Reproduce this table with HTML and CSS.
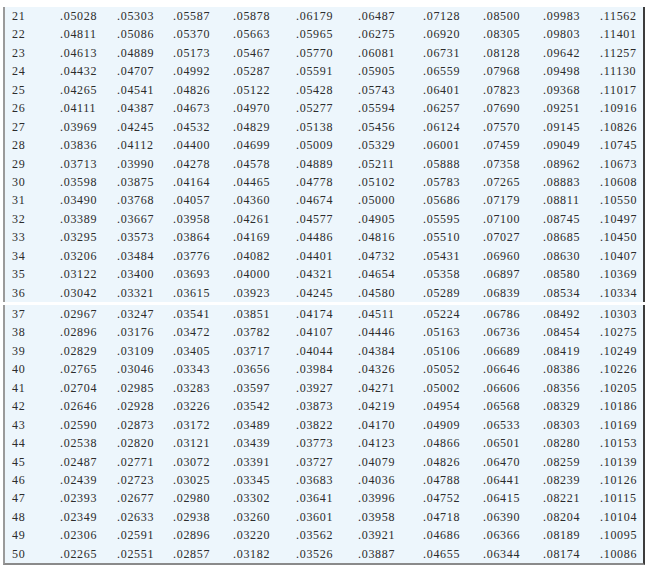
FILE: index.html
```html
<!DOCTYPE html>
<html>
<head>
<meta charset="utf-8">
<link rel="stylesheet" href="styles.css">
</head>
<body>
<div class="page">
  <div class="block">
    <div class="row"><span>21</span><span>.05028</span><span>.05303</span><span>.05587</span><span>.05878</span><span>.06179</span><span>.06487</span><span>.07128</span><span>.08500</span><span>.09983</span><span>.11562</span></div>
    <div class="row"><span>22</span><span>.04811</span><span>.05086</span><span>.05370</span><span>.05663</span><span>.05965</span><span>.06275</span><span>.06920</span><span>.08305</span><span>.09803</span><span>.11401</span></div>
    <div class="row"><span>23</span><span>.04613</span><span>.04889</span><span>.05173</span><span>.05467</span><span>.05770</span><span>.06081</span><span>.06731</span><span>.08128</span><span>.09642</span><span>.11257</span></div>
    <div class="row"><span>24</span><span>.04432</span><span>.04707</span><span>.04992</span><span>.05287</span><span>.05591</span><span>.05905</span><span>.06559</span><span>.07968</span><span>.09498</span><span>.11130</span></div>
    <div class="row"><span>25</span><span>.04265</span><span>.04541</span><span>.04826</span><span>.05122</span><span>.05428</span><span>.05743</span><span>.06401</span><span>.07823</span><span>.09368</span><span>.11017</span></div>
    <div class="row"><span>26</span><span>.04111</span><span>.04387</span><span>.04673</span><span>.04970</span><span>.05277</span><span>.05594</span><span>.06257</span><span>.07690</span><span>.09251</span><span>.10916</span></div>
    <div class="row"><span>27</span><span>.03969</span><span>.04245</span><span>.04532</span><span>.04829</span><span>.05138</span><span>.05456</span><span>.06124</span><span>.07570</span><span>.09145</span><span>.10826</span></div>
    <div class="row"><span>28</span><span>.03836</span><span>.04112</span><span>.04400</span><span>.04699</span><span>.05009</span><span>.05329</span><span>.06001</span><span>.07459</span><span>.09049</span><span>.10745</span></div>
    <div class="row"><span>29</span><span>.03713</span><span>.03990</span><span>.04278</span><span>.04578</span><span>.04889</span><span>.05211</span><span>.05888</span><span>.07358</span><span>.08962</span><span>.10673</span></div>
    <div class="row"><span>30</span><span>.03598</span><span>.03875</span><span>.04164</span><span>.04465</span><span>.04778</span><span>.05102</span><span>.05783</span><span>.07265</span><span>.08883</span><span>.10608</span></div>
    <div class="row"><span>31</span><span>.03490</span><span>.03768</span><span>.04057</span><span>.04360</span><span>.04674</span><span>.05000</span><span>.05686</span><span>.07179</span><span>.08811</span><span>.10550</span></div>
    <div class="row"><span>32</span><span>.03389</span><span>.03667</span><span>.03958</span><span>.04261</span><span>.04577</span><span>.04905</span><span>.05595</span><span>.07100</span><span>.08745</span><span>.10497</span></div>
    <div class="row"><span>33</span><span>.03295</span><span>.03573</span><span>.03864</span><span>.04169</span><span>.04486</span><span>.04816</span><span>.05510</span><span>.07027</span><span>.08685</span><span>.10450</span></div>
    <div class="row"><span>34</span><span>.03206</span><span>.03484</span><span>.03776</span><span>.04082</span><span>.04401</span><span>.04732</span><span>.05431</span><span>.06960</span><span>.08630</span><span>.10407</span></div>
    <div class="row"><span>35</span><span>.03122</span><span>.03400</span><span>.03693</span><span>.04000</span><span>.04321</span><span>.04654</span><span>.05358</span><span>.06897</span><span>.08580</span><span>.10369</span></div>
    <div class="row"><span>36</span><span>.03042</span><span>.03321</span><span>.03615</span><span>.03923</span><span>.04245</span><span>.04580</span><span>.05289</span><span>.06839</span><span>.08534</span><span>.10334</span></div>
  </div>
  <div class="block last">
    <div class="row"><span>37</span><span>.02967</span><span>.03247</span><span>.03541</span><span>.03851</span><span>.04174</span><span>.04511</span><span>.05224</span><span>.06786</span><span>.08492</span><span>.10303</span></div>
    <div class="row"><span>38</span><span>.02896</span><span>.03176</span><span>.03472</span><span>.03782</span><span>.04107</span><span>.04446</span><span>.05163</span><span>.06736</span><span>.08454</span><span>.10275</span></div>
    <div class="row"><span>39</span><span>.02829</span><span>.03109</span><span>.03405</span><span>.03717</span><span>.04044</span><span>.04384</span><span>.05106</span><span>.06689</span><span>.08419</span><span>.10249</span></div>
    <div class="row"><span>40</span><span>.02765</span><span>.03046</span><span>.03343</span><span>.03656</span><span>.03984</span><span>.04326</span><span>.05052</span><span>.06646</span><span>.08386</span><span>.10226</span></div>
    <div class="row"><span>41</span><span>.02704</span><span>.02985</span><span>.03283</span><span>.03597</span><span>.03927</span><span>.04271</span><span>.05002</span><span>.06606</span><span>.08356</span><span>.10205</span></div>
    <div class="row"><span>42</span><span>.02646</span><span>.02928</span><span>.03226</span><span>.03542</span><span>.03873</span><span>.04219</span><span>.04954</span><span>.06568</span><span>.08329</span><span>.10186</span></div>
    <div class="row"><span>43</span><span>.02590</span><span>.02873</span><span>.03172</span><span>.03489</span><span>.03822</span><span>.04170</span><span>.04909</span><span>.06533</span><span>.08303</span><span>.10169</span></div>
    <div class="row"><span>44</span><span>.02538</span><span>.02820</span><span>.03121</span><span>.03439</span><span>.03773</span><span>.04123</span><span>.04866</span><span>.06501</span><span>.08280</span><span>.10153</span></div>
    <div class="row"><span>45</span><span>.02487</span><span>.02771</span><span>.03072</span><span>.03391</span><span>.03727</span><span>.04079</span><span>.04826</span><span>.06470</span><span>.08259</span><span>.10139</span></div>
    <div class="row"><span>46</span><span>.02439</span><span>.02723</span><span>.03025</span><span>.03345</span><span>.03683</span><span>.04036</span><span>.04788</span><span>.06441</span><span>.08239</span><span>.10126</span></div>
    <div class="row"><span>47</span><span>.02393</span><span>.02677</span><span>.02980</span><span>.03302</span><span>.03641</span><span>.03996</span><span>.04752</span><span>.06415</span><span>.08221</span><span>.10115</span></div>
    <div class="row"><span>48</span><span>.02349</span><span>.02633</span><span>.02938</span><span>.03260</span><span>.03601</span><span>.03958</span><span>.04718</span><span>.06390</span><span>.08204</span><span>.10104</span></div>
    <div class="row"><span>49</span><span>.02306</span><span>.02591</span><span>.02896</span><span>.03220</span><span>.03562</span><span>.03921</span><span>.04686</span><span>.06366</span><span>.08189</span><span>.10095</span></div>
    <div class="row"><span>50</span><span>.02265</span><span>.02551</span><span>.02857</span><span>.03182</span><span>.03526</span><span>.03887</span><span>.04655</span><span>.06344</span><span>.08174</span><span>.10086</span></div>
  </div>
</div>
</body>
</html>
```

FILE: styles.css
```css
html, body {
  margin: 0;
  padding: 0;
  background: #ffffff;
}

body {
  font-family: "Liberation Serif", "Times New Roman", serif;
}

.page {
  padding-top: 7px;
  padding-left: 3px;
  width: 642px;
}

.block {
  background: #edf6fc;
  border-left: 2px solid #9a9a9a;
  border-right: 2px solid #3c3c3c;
  padding-left: 7px;
}

.block + .block {
  margin-top: 3px;
}

.block.last {
  border-bottom: 2px solid #8a8a8a;
}

.row {
  display: grid;
  grid-template-columns: 48px 57px 56px 60px 63px 62px 65px 60px 60px 57px 1fr;
  height: 18.45px;
  line-height: 18.45px;
  font-size: 12px;
  letter-spacing: 0.7px;
  color: #2b2b2b;
  white-space: nowrap;
}
```
